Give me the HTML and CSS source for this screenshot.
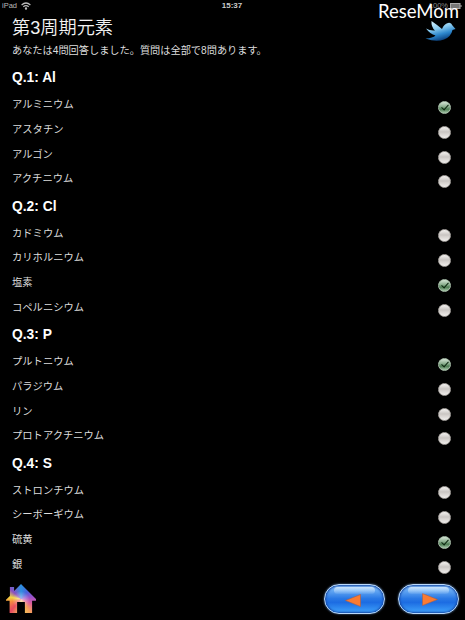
FILE: index.html
```
<!DOCTYPE html>
<html lang="ja">
<head>
<meta charset="utf-8">
<title>第3周期元素</title>
<link rel="stylesheet" href="styles.css">
</head>
<body>
<div class="screen">
  <header class="status">
    <div class="carrier">iPad
      <svg width="10" height="8" viewBox="0 0 10 8" fill="none" stroke="#bbb" stroke-width="1.2"><path d="M.6 3Q5-1 9.4 3M2.3 4.8Q5 2.4 7.7 4.8"/><circle cx="5" cy="6.5" r=".6" fill="#bbb"/></svg>
    </div>
    <div class="clock">15:37</div>
    <div class="battery">100%
      <svg width="12" height="6" viewBox="0 0 12 6"><rect x=".5" y=".5" width="9.5" height="5" fill="#777" stroke="#aaa"/><path d="M11 2v2" stroke="#aaa"/></svg>
    </div>
  </header>
  <svg class="watermark" width="87" height="30" viewBox="0 0 87 30"><text x="3" y="18" textLength="81" lengthAdjust="spacingAndGlyphs">ReseMom</text></svg>
  <svg class="bird" width="34" height="26" viewBox="0 0 34 26">
    <defs><linearGradient id="birdFill" x1="0" y1="0" x2=".4" y2="1"><stop offset="0" stop-color="#e8faff"/><stop offset=".45" stop-color="#8bccf0"/><stop offset=".75" stop-color="#2c86cc"/><stop offset="1" stop-color="#0d4684"/></linearGradient></defs>
    <path fill="url(#birdFill)" d="M7.500 2Q12 5 18 10Q20 5 24 4Q27 3 28.500 6.500L31.500 10L28.500 11Q27 18 20 20.500Q12 23.500 1.500 19.500Q9 19 11.500 16.500Q6 15 2 9.500Q6 12 11 11.500Q7 8 7.500 2Z"/>
  </svg>
  <main class="quiz">
    <h1>第3周期元素</h1>
    <p class="progress">あなたは4問回答しました。質問は全部で8問あります。</p>
    <section>
      <h2>Q.1: Al</h2>
      <div class="option"><span>アルミニウム</span><i class="radio checked"></i></div>
      <div class="option"><span>アスタチン</span><i class="radio"></i></div>
      <div class="option"><span>アルゴン</span><i class="radio"></i></div>
      <div class="option"><span>アクチニウム</span><i class="radio"></i></div>
    </section>
    <section>
      <h2>Q.2: Cl</h2>
      <div class="option"><span>カドミウム</span><i class="radio"></i></div>
      <div class="option"><span>カリホルニウム</span><i class="radio"></i></div>
      <div class="option"><span>塩素</span><i class="radio checked"></i></div>
      <div class="option"><span>コペルニシウム</span><i class="radio"></i></div>
    </section>
    <section>
      <h2>Q.3: P</h2>
      <div class="option"><span>プルトニウム</span><i class="radio checked"></i></div>
      <div class="option"><span>パラジウム</span><i class="radio"></i></div>
      <div class="option"><span>リン</span><i class="radio"></i></div>
      <div class="option"><span>プロトアクチニウム</span><i class="radio"></i></div>
    </section>
    <section>
      <h2>Q.4: S</h2>
      <div class="option"><span>ストロンチウム</span><i class="radio"></i></div>
      <div class="option"><span>シーボーギウム</span><i class="radio"></i></div>
      <div class="option"><span>硫黄</span><i class="radio checked"></i></div>
      <div class="option"><span>銀</span><i class="radio"></i></div>
    </section>
  </main>
  <footer class="toolbar">
    <div class="home"><div class="house"></div></div>
    <div class="nav">
      <div class="pill"><svg width="16" height="13" viewBox="0 0 16 13"><path d="M.5 6.500L15.500.5V12.500Z" fill="#fa7b32" stroke="#a8604a" stroke-width=".6"/></svg></div>
      <div class="pill next"><svg width="16" height="13" viewBox="0 0 16 13"><path d="M15.500 6.500L.5.5V12.500Z" fill="#fa7b32" stroke="#a8604a" stroke-width=".6"/></svg></div>
    </div>
  </footer>
</div>
</body>
</html>
```
FILE: styles.css
```
* { box-sizing: border-box; }
body {
  margin: 0;
  background: #000;
  color: #fff;
  font-family: "Liberation Sans", "Noto Sans CJK JP", sans-serif;
}
.screen {
  position: relative;
  width: 465px;
  height: 620px;
  overflow: hidden;
  display: flex;
  flex-direction: column;
}
.status {
  height: 11px;
  flex: none;
  display: grid;
  grid-template-columns: 1fr auto 1fr;
  align-items: center;
  padding: 0 3px 0 2px;
  font-size: 7.500px;
  line-height: 11px;
  color: #bbb;
}
.carrier, .battery { display: flex; align-items: center; gap: 4px; }
.battery { justify-content: flex-end; gap: 2px; color: #888; }
.clock { font-weight: bold; font-size: 8px; color: #ccc; }
.watermark { position: absolute; left: 375px; top: 0; overflow: visible; }
.watermark text {
  font-family: Lato, sans-serif;
  font-size: 20px;
  fill: #fff;
}
.bird { position: absolute; left: 424px; top: 19px; }
.quiz { padding: 4px 14px 0 12px; flex: 1; }
h1 {
  margin: 0;
  height: 27px;
  font-size: 18.200px;
  line-height: 26px;
  font-weight: 350;
  color: #f2f2f2;
}
.progress {
  margin: 0;
  height: 21.300px;
  font-size: 10.200px;
  line-height: 17px;
  color: #ddd;
  white-space: nowrap;
}
section { height: 128.500px; }
h2 {
  margin: 0;
  height: 29.300px;
  font-size: 13.800px;
  line-height: 29.300px;
  font-weight: bold;
}
.option {
  height: 24.800px;
  display: flex;
  align-items: center;
  justify-content: space-between;
  font-size: 10.300px;
  line-height: 24.800px;
  color: #ddd;
}
.option span { padding-top: 1px; }
.radio {
  width: 13px;
  height: 13px;
  margin-top: 5px;
  border-radius: 50%;
  border: 1px solid #aaa6a2;
  background: linear-gradient(#f4f2f0, #c9c5c2 45%, #d6d2cf 60%, #f0eeec);
  display: flex;
  justify-content: center;
}
.radio.checked {
  border-color: #a9bfaa;
  background: linear-gradient(#d5e5d6, #85aa89 45%, #4c7c52 65%, #a5c6a8);
}
.radio.checked::after {
  content: "";
  width: 3px;
  height: 6px;
  margin-top: 1px;
  border: solid #0c2810;
  border-width: 0 1.500px 1.500px 0;
  transform: rotate(42deg);
}
.toolbar {
  height: 42px;
  flex: none;
  display: flex;
  justify-content: space-between;
  padding: 6px 6px 0 6px;
}
.house {
  width: 30px;
  height: 29px;
  clip-path: polygon(0 54%, 13% 41%, 13% 10%, 27% 10%, 27% 24%, 50% 0, 100% 52%, 100% 58%, 87% 58%, 87% 100%, 63% 100%, 63% 62%, 37% 62%, 37% 100%, 12% 100%, 12% 58%, 0 58%);
  background: radial-gradient(circle at 50% 55%, #ffffff90, #ffffff00 40%), conic-gradient(from 0deg at 50% 52%, #2c8fe0, #4a62dc 40deg, #9c50c8 80deg, #e0609a 115deg, #f5a05a 145deg, #f3d65b 180deg, #e94a60 220deg, #f58a40 255deg, #f2d840 280deg, #8a50c0 312deg, #2c8fe0);
}
.nav { display: flex; gap: 13px; }
.pill {
  width: 61px;
  height: 30px;
  border-radius: 15px;
  border: 1.500px solid #b9d9fb;
  background: linear-gradient(#8fc4f8 0, #68abf4 18%, #2a79e5 48%, #1c6ce2 62%, #40a4fc 100%);
  box-shadow: inset 0 0 2px 1px #1547a5, 0 0 2px #5b82b5;
  display: flex;
  align-items: center;
  justify-content: center;
  position: relative;
}
.pill::before {
  content: "";
  position: absolute;
  left: 9px;
  right: 9px;
  top: 2px;
  height: 7px;
  border-radius: 6px;
  background: linear-gradient(#d9edffd0, #ffffff10);
}
.pill svg { margin: 2px 4px 0 0; }
.pill.next svg { margin: 0 0 0 3px; }
```
